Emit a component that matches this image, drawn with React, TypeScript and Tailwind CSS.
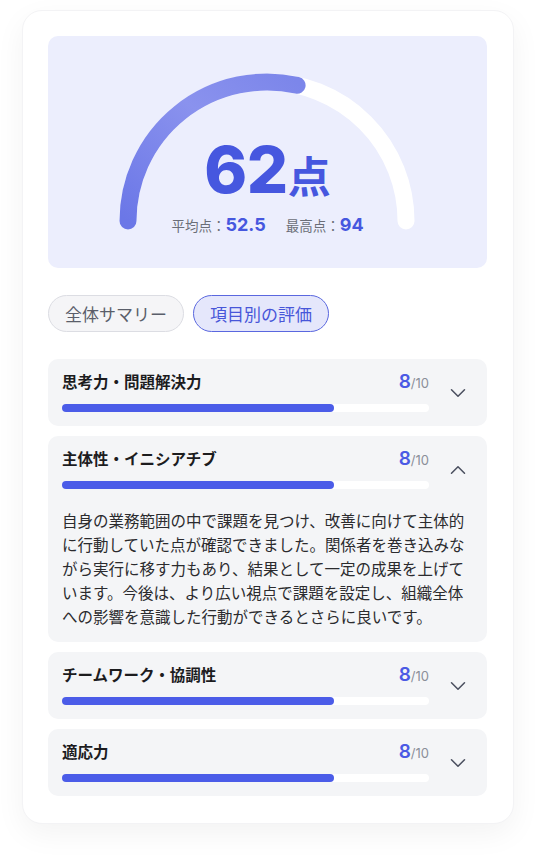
import { ChevronDown, ChevronUp } from "lucide-react";

type Item = {
  title: string;
  score: number;
  open?: boolean;
  body?: string;
};

const items: Item[] = [
  { title: "思考力・問題解決力", score: 8 },
  {
    title: "主体性・イニシアチブ",
    score: 8,
    open: true,
    body: "自身の業務範囲の中で課題を見つけ、改善に向けて主体的に行動していた点が確認できました。関係者を巻き込みながら実行に移す力もあり、結果として一定の成果を上げています。今後は、より広い視点で課題を設定し、組織全体への影響を意識した行動ができるとさらに良いです。",
  },
  { title: "チームワーク・協調性", score: 8 },
  { title: "適応力", score: 8 },
];

const num = "font-['Inter','Noto_Sans_CJK_JP',sans-serif]";

function Gauge() {
  // center (219,185) in panel coords, r 139
  const cx = 219;
  const cy = 185;
  const r = 139;
  const a = (102.5 * Math.PI) / 180;
  const ex = cx - r * Math.cos(a);
  const ey = cy - r * Math.sin(a);
  return (
    <svg className="absolute inset-0" width="439" height="232" viewBox="0 0 439 232">
      <defs>
        <linearGradient id="g" x1="0" y1="1" x2="1" y2="0">
          <stop offset="0" stopColor="#6b77e7" />
          <stop offset="0.6" stopColor="#8a92ee" />
          <stop offset="1" stopColor="#7c86ea" />
        </linearGradient>
      </defs>
      <path
        d={`M ${cx - r} ${cy} A ${r} ${r} 0 0 1 ${cx + r} ${cy}`}
        fill="none"
        stroke="#ffffff"
        strokeWidth="17"
        strokeLinecap="round"
      />
      <path
        d={`M ${cx - r} ${cy} A ${r} ${r} 0 0 1 ${ex} ${ey}`}
        fill="none"
        stroke="url(#g)"
        strokeWidth="17"
        strokeLinecap="round"
      />
    </svg>
  );
}

function Row({ item }: { item: Item }) {
  return (
    <div className="rounded-[10px] bg-[#f4f5f7]">
      <div className="flex">
        <div className="flex-1 pl-[14px] pt-[10px] pb-[14px]">
          <div className="flex items-baseline justify-between h-[24px]">
            <span className="text-[15.5px] font-bold text-[#1c1c1e] leading-[24px]">{item.title}</span>
            <span className={`${num} leading-[24px]`}>
              <span className="text-[19px] font-semibold text-[#4b5ae4]">{item.score}</span>
              <span className="text-[13px] text-[#8b8f99]">/10</span>
            </span>
          </div>
          <div className="mt-[11px] h-2 rounded-full bg-white">
            <div className="h-2 w-[74%] rounded-full bg-[#4b5ce8]" />
          </div>
        </div>
        <div className="w-[58px] flex items-center justify-center text-[#4b5060]">
          {item.open ? (
            <ChevronUp size={26} strokeWidth={1.4} />
          ) : (
            <ChevronDown size={26} strokeWidth={1.4} />
          )}
        </div>
      </div>
      {item.open && (
        <p className="pl-[14px] pr-[14px] pb-[14px] mt-[5px] text-[15.5px] leading-[24px] text-[#2b2b2e]">
          {item.body}
        </p>
      )}
    </div>
  );
}

export default function App() {
  return (
    <div className="min-h-screen bg-white font-['Noto_Sans_CJK_JP','Noto_Sans',sans-serif] pt-[10px] pb-[35px]">
      <div className="mx-[22px] rounded-[20px] bg-white border border-[#f3f3f5] shadow-[0_10px_30px_rgba(0,0,0,0.05)] pt-[25px] pl-[25px] pr-[26px] pb-[27px]">
        <div className="relative h-[232px] rounded-[10px] bg-[#eceefd]">
          <Gauge />
          <div className="relative flex flex-col items-center pt-[101px]">
            <div className="flex items-baseline text-[#4657df] leading-none">
              <span className={`${num} text-[65px] font-extrabold tracking-[-0.5px]`}>62</span>
              <span className="text-[43px] font-bold">点</span>
            </div>
            <div className="mt-[9px] flex items-baseline gap-[20px] h-[20px]">
              <span className="flex items-baseline">
                <span className="text-[13.5px] text-[#6b6e78]">平均点：</span>
                <span className={`${num} text-[18px] font-bold text-[#4657df]`}>52.5</span>
              </span>
              <span className="flex items-baseline">
                <span className="text-[13.5px] text-[#6b6e78]">最高点：</span>
                <span className={`${num} text-[18px] font-bold text-[#4657df]`}>94</span>
              </span>
            </div>
          </div>
        </div>

        <div className="mt-[27px] flex gap-[9px]">
          <button className="rounded-full border border-[#dcdde3] bg-[#f5f5f7] px-[16px] py-[5px] text-[17px] leading-[25px] text-[#5a5e6a]">
            全体サマリー
          </button>
          <button className="rounded-full border border-[#5a67df] bg-[#e5e7fb] px-[16px] py-[5px] text-[17px] leading-[25px] text-[#4856d9]">
            項目別の評価
          </button>
        </div>

        <div className="mt-[27px] flex flex-col gap-[10px]">
          {items.map((it) => (
            <Row key={it.title} item={it} />
          ))}
        </div>
      </div>
    </div>
  );
}
